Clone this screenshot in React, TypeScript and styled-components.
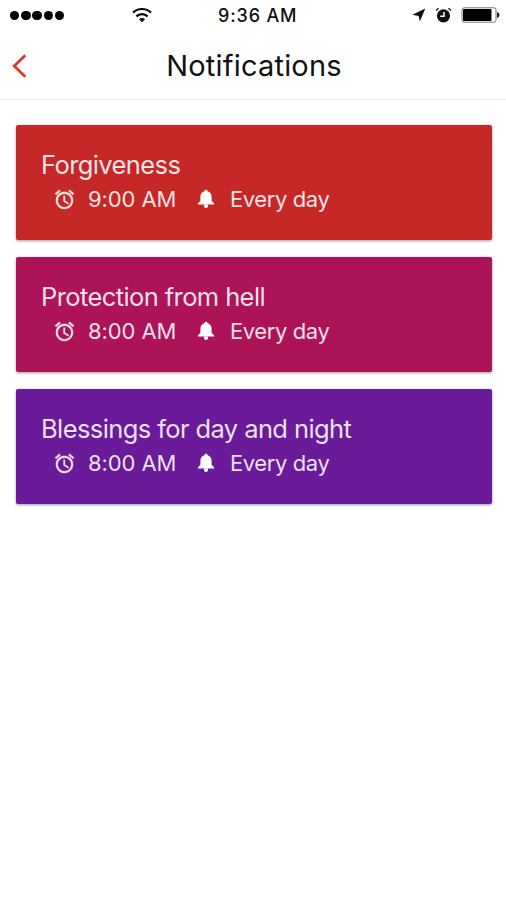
import React from 'react';
import styled, { createGlobalStyle } from 'styled-components';
import { MdAccessAlarm } from 'react-icons/md';

const GlobalStyle = createGlobalStyle`
  * { box-sizing: border-box; }
  body {
    margin: 0;
    background: #fff;
    font-family: Inter, 'Liberation Sans', sans-serif;
  }
`;

const Screen = styled.main`
  display: flex;
  flex-direction: column;
  width: 506px;
  height: 900px;
  overflow: hidden;
  background: #fff;
`;

const StatusBar = styled.div`
  display: grid;
  grid-template-columns: 208px auto 1fr;
  align-items: center;
  height: 31px;
  padding: 0 6px 0 10px;
`;

const StatusLeft = styled.div`
  display: flex;
  align-items: center;
  gap: 68px;
`;

const SignalDots = styled.div`
  display: flex;
  gap: 1.8px;
`;

const SignalDot = styled.span`
  width: 9.4px;
  height: 9.4px;
  border-radius: 50%;
  background: #000;
`;

const Clock = styled.time`
  color: #111;
  font-size: 18px;
  font-weight: 500;
  line-height: 31px;
  letter-spacing: 0.85px;
`;

const StatusRight = styled.div`
  display: flex;
  align-items: center;
  justify-content: flex-end;
`;

const Glyph = styled.svg<{ $gap?: number }>`
  display: block;
  flex: none;
  margin-top: -1px;
  margin-right: ${({ $gap = 0 }) => $gap}px;
`;

const NavBar = styled.header`
  display: grid;
  grid-template-columns: 60px 1fr 58px;
  align-items: center;
  height: 69px;
  border-bottom: 1px solid #e6e6e6;
`;

const BackButton = styled.button`
  display: flex;
  align-items: center;
  height: 44px;
  padding: 2px 0 0 11px;
  border: 0;
  background: none;
`;

const Title = styled.h1`
  margin: 0;
  padding-top: 2px;
  color: #111;
  font-size: 29px;
  font-weight: 400;
  line-height: 36px;
  letter-spacing: 0.2px;
  text-align: center;
  white-space: nowrap;
`;

const CardList = styled.section`
  display: flex;
  flex-direction: column;
  gap: 17px;
  padding: 25px 14px 0 16px;
`;

const Card = styled.article<{ $color: string }>`
  height: 115px;
  padding: 23px 25px;
  border-radius: 2px;
  background: ${({ $color }) => $color};
  box-shadow: 0 1px 3px rgba(0, 0, 0, 0.4);
  color: rgba(255, 255, 255, 0.88);
`;

const CardTitle = styled.h2`
  margin: 0;
  font-size: 25.5px;
  font-weight: 400;
  line-height: 34px;
  letter-spacing: -0.6px;
  white-space: nowrap;
`;

const Schedule = styled.div`
  display: flex;
  align-items: center;
  height: 34px;
  padding-left: 12px;
  font-size: 22px;
  line-height: 34px;
  white-space: nowrap;
`;

const AlarmIcon = styled(MdAccessAlarm)`
  width: 23px;
  height: 23px;
  margin-right: 1px;
  flex: none;

  path:not([fill='none']) {
    stroke: currentColor;
    stroke-width: 0.3px;
  }
`;

const BellIcon = styled.svg`
  width: 22px;
  height: 22px;
  flex: none;
  fill: #fff;
`;

const Time = styled.span`
  width: 118px;
  padding-left: 11px;
  letter-spacing: -0.1px;
`;

const Repeat = styled.span`
  padding-left: 13px;
  letter-spacing: -0.4px;
`;

const reminders = [
  { title: 'Forgiveness', time: '9:00 AM', repeat: 'Every day', color: '#c62828' },
  { title: 'Protection from hell', time: '8:00 AM', repeat: 'Every day', color: '#ad1457' },
  { title: 'Blessings for day and night', time: '8:00 AM', repeat: 'Every day', color: '#6a1b9a' },
];

const BellGlyph = () => (
  <BellIcon viewBox="0 0 22 22">
    <path d="M11 1.8c.9 0 1.5.6 1.6 1.4 2.5.7 4 2.8 4 5.5v4.1l2.6 2.7v1.1H2.8v-1.1l2.6-2.7V8.7c0-2.7 1.5-4.8 4-5.5.1-.8.7-1.4 1.6-1.4z" />
    <path d="M9 16.4h4V18a2 2 0 0 1-4 0z" />
  </BellIcon>
);

const WifiGlyph = () => (
  <Glyph width="20" height="16" viewBox="0 0 20 16" fill="none" stroke="#000" strokeWidth="2.2">
    <path d="M1 5.6C6 .8 14 .8 19 5.6" />
    <path d="M4.4 9.4c3-3 8.2-3 11.2 0" />
    <path d="M10 15.2l-3-3c1.8-1.6 4.2-1.6 6 0z" fill="#000" stroke="none" />
  </Glyph>
);

const LocationGlyph = () => (
  <Glyph $gap={9} width="14" height="14" viewBox="0 0 14 14">
    <path d="M13.3.5L7.8 13.6 6.7 7.9.3 6.8z" fill="#111" />
  </Glyph>
);

const AlarmGlyph = () => (
  <Glyph $gap={9} width="17" height="16" viewBox="0 0 17 16" fill="none">
    <circle cx="8.5" cy="8.8" r="6.6" fill="#111" />
    <path d="M1 3.4L3.6 1.3M16 3.4L13.4 1.3" stroke="#111" strokeWidth="1.3" />
    <path d="M9 5v4.3H5.2" stroke="#fff" strokeWidth="1.5" />
  </Glyph>
);

const BatteryGlyph = () => (
  <Glyph width="39" height="16" viewBox="0 0 39 16" fill="none">
    <rect x="1" y=".8" width="34" height="14.4" rx="2" stroke="#777" />
    <rect x="2" y="2" width="28.5" height="12" rx=".7" fill="#000" />
    <path d="M36 5c3.3.7 3.3 5.3 0 6z" fill="#222" />
  </Glyph>
);

export default function App() {
  return (
    <Screen>
      <GlobalStyle />
      <StatusBar>
        <StatusLeft>
          <SignalDots>
            {[0, 1, 2, 3, 4].map((dot) => (
              <SignalDot key={dot} />
            ))}
          </SignalDots>
          <WifiGlyph />
        </StatusLeft>
        <Clock>9:36 AM</Clock>
        <StatusRight>
          <LocationGlyph />
          <AlarmGlyph />
          <BatteryGlyph />
        </StatusRight>
      </StatusBar>
      <NavBar>
        <BackButton aria-label="Back">
          <Glyph width="16" height="26" viewBox="0 0 16 26" fill="none" stroke="#e53527" strokeWidth="2.8">
            <path d="M14.3 2.2L3.2 13l11.1 10.8" />
          </Glyph>
        </BackButton>
        <Title>Notifications</Title>
      </NavBar>
      <CardList>
        {reminders.map((item) => (
          <Card key={item.title} $color={item.color}>
            <CardTitle>{item.title}</CardTitle>
            <Schedule>
              <AlarmIcon />
              <Time>{item.time}</Time>
              <BellGlyph />
              <Repeat>{item.repeat}</Repeat>
            </Schedule>
          </Card>
        ))}
      </CardList>
    </Screen>
  );
}
